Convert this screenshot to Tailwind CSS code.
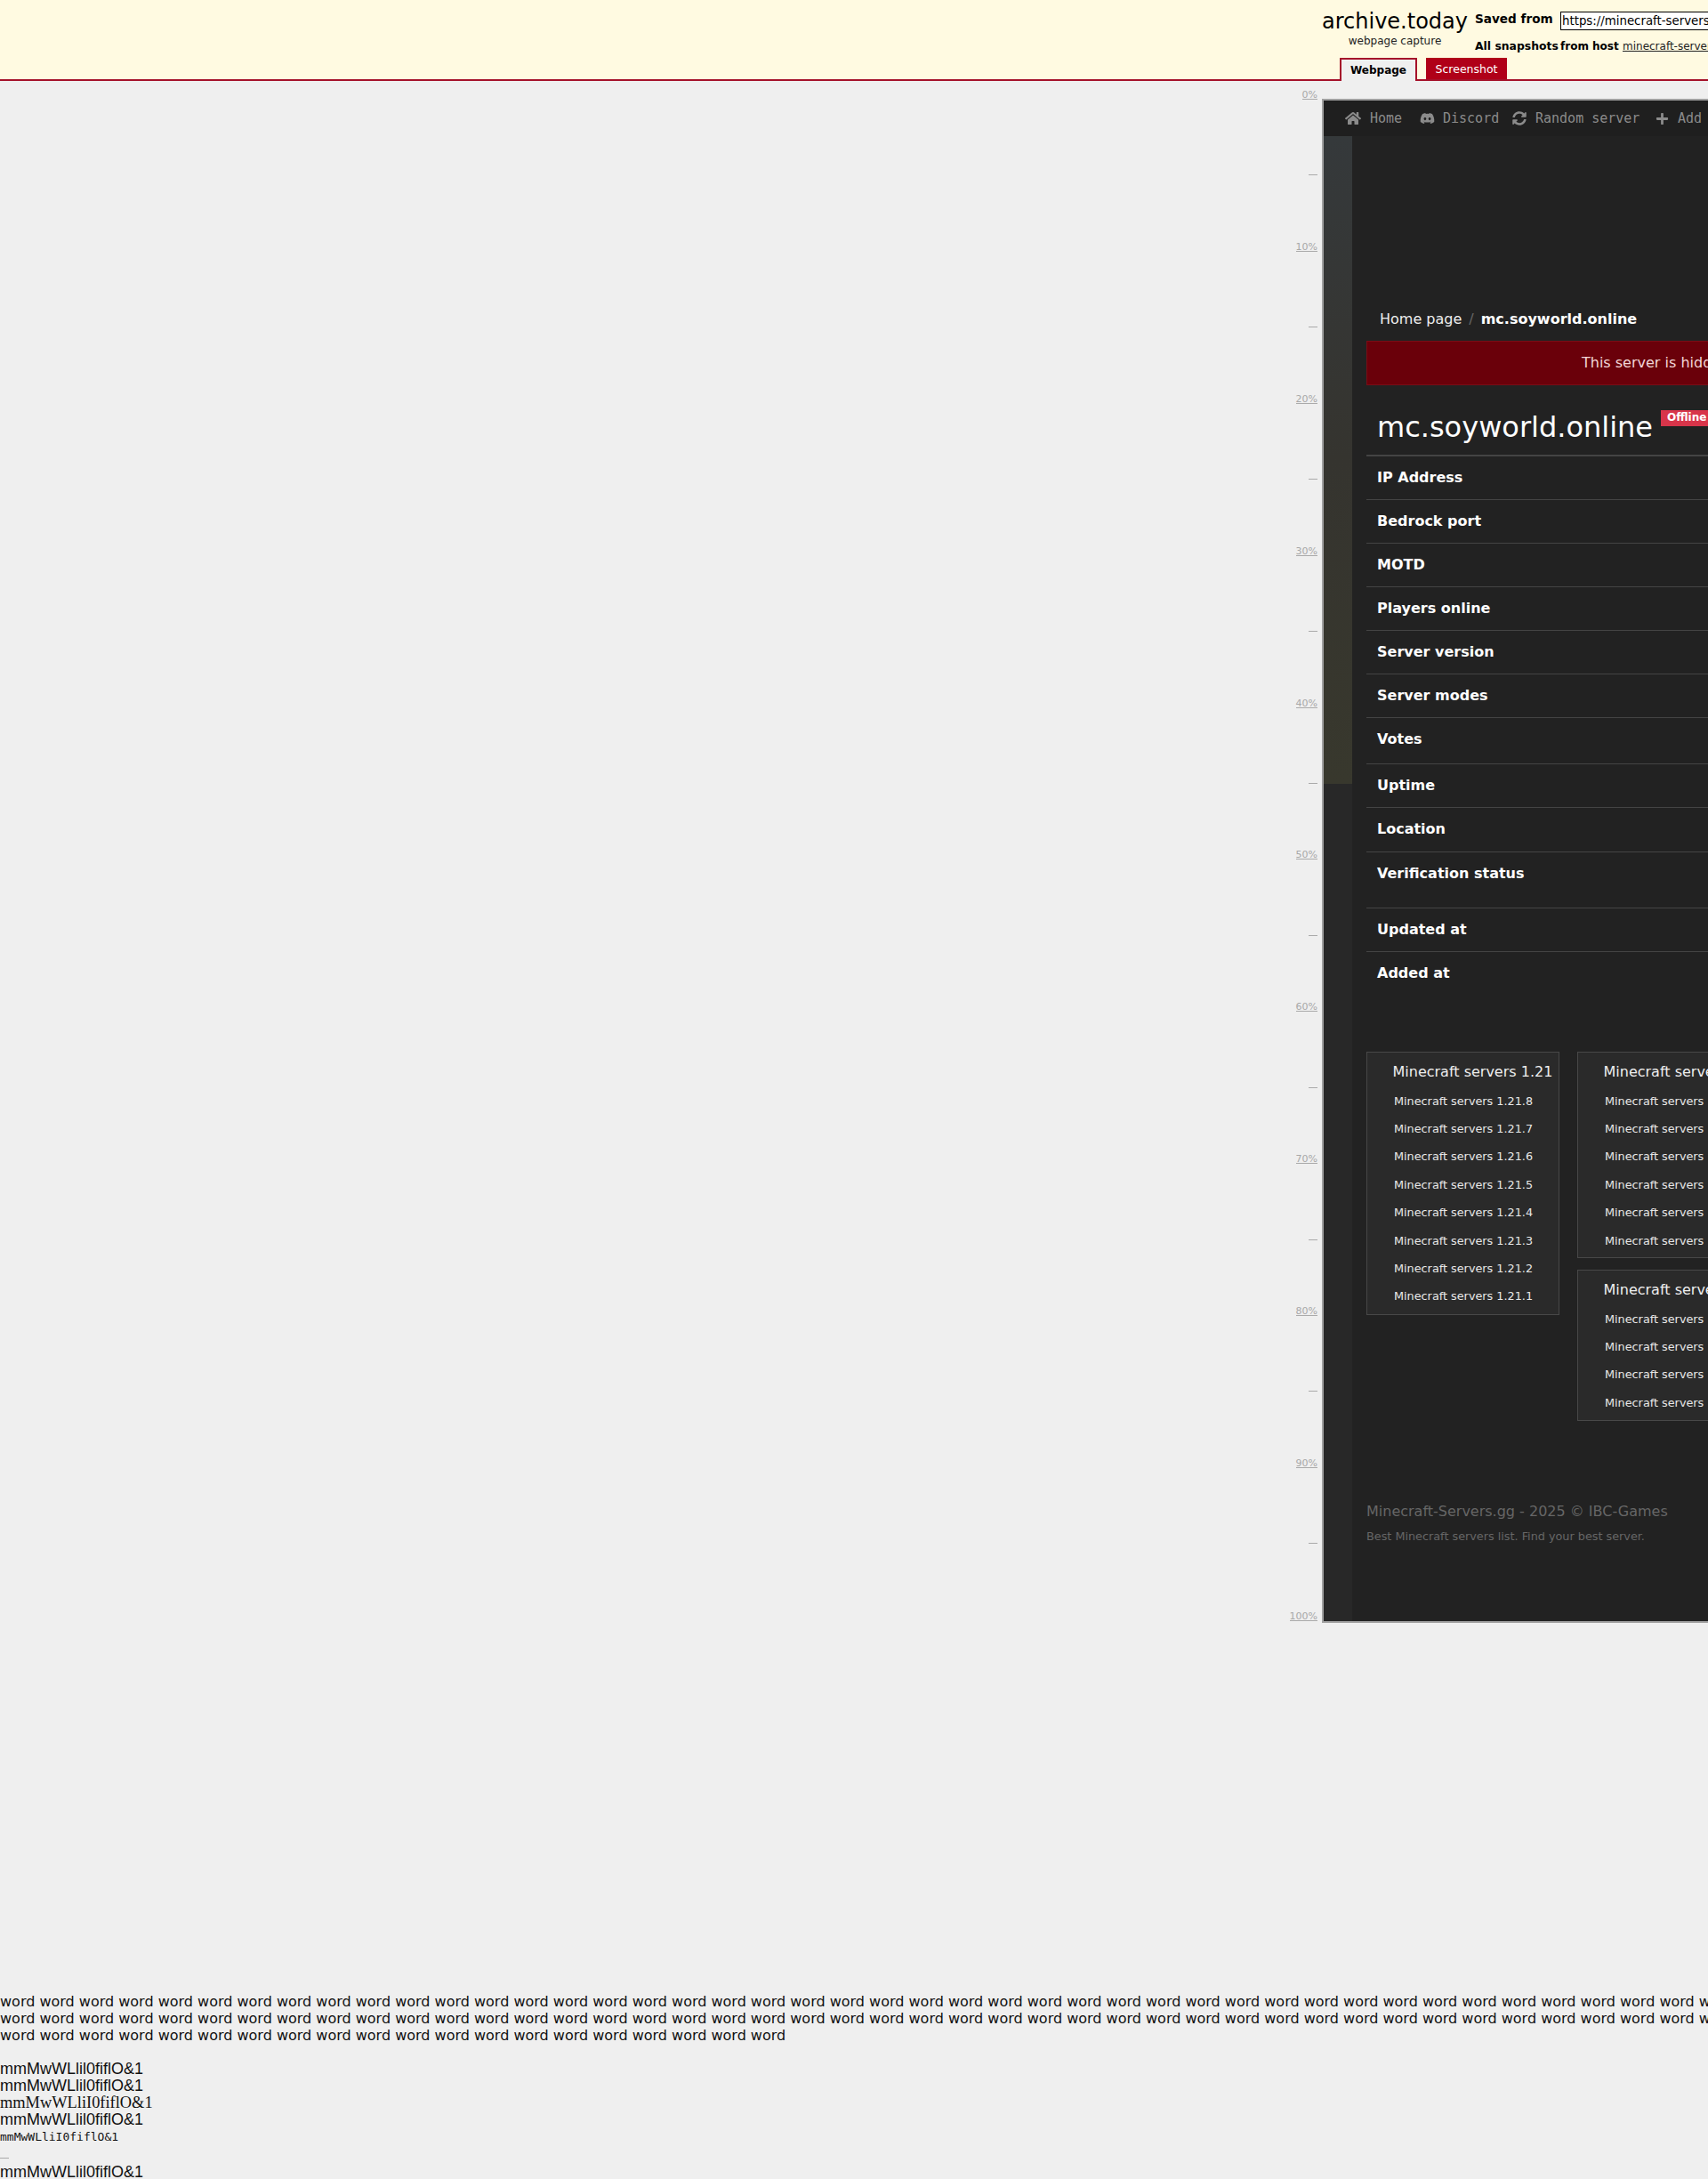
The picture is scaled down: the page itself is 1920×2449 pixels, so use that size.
<!DOCTYPE html>
<html lang="en">
  <head>
    <meta charset="UTF-8" />
    <title>mc.soyworld.online - archive.today</title>
    <script src="https://cdn.jsdelivr.net/npm/@tailwindcss/browser@4"></script>
  </head>
  <body class="w-[1920px] h-[2449px] overflow-hidden bg-[#efefef] font-['DejaVu_Sans',sans-serif] text-black">
    <!-- archive header -->
    <header class="h-[91px] bg-[#fffae1] border-b-2 border-[#a5122a] flex pl-[1486px]">
      <div class="w-[172px] shrink-0">
        <div class="w-[164px] text-center">
          <div class="text-[24px] leading-[28px] pt-[10px]">archive.today</div>
          <div class="text-[12px] leading-[14px] text-[#222] mt-[1px]">webpage capture</div>
        </div>
        <div class="flex gap-[10px] ml-[20px] mt-[12px]">
          <div class="relative z-10 w-[87px] h-[26px] shrink-0 bg-[#efefef] border-2 border-b-0 border-[#a5122a] text-[12px] leading-[24px] font-bold text-center">Webpage</div>
          <div class="w-[91px] h-[24px] shrink-0 bg-[#b00018] text-white text-[12.5px] leading-[26px] text-center">Screenshot</div>
        </div>
      </div>
      <div class="shrink-0 text-[13.6px] font-bold">
        <div class="flex items-start pt-[13px] h-[43px]">
          <span class="w-[96px] leading-[16px]">Saved from</span>
          <div class="w-[300px] h-[21px] bg-white border border-black text-[13.33px] font-normal leading-[19px] px-[1px] whitespace-nowrap overflow-hidden">https://minecraft-servers.gg/server/mc.soyworld.online</div>
        </div>
        <div class="flex items-center text-[12px] leading-[18px] whitespace-nowrap">
          <span class="w-[96px] text-[12.4px]">All snapshots</span>
          <span class="w-[70px]">from host</span>
          <a class="font-normal underline text-[#222]">minecraft-servers.gg</a>
        </div>
      </div>
    </header>

    <main class="flex h-[1733px]">
      <!-- percent ruler -->
      <div class="w-[1481px] shrink-0 flex flex-col items-end text-[11px] leading-[8px] text-[#a8a8a8]">
        <div class="h-[21px] flex items-end"><span class="border-b border-[#aaa] pt-[1px]">0%</span></div>
        <div class="h-[85.45px] flex items-end"><span class="w-[10px] border-b border-[#aaa]"></span></div>
        <div class="h-[85.45px] flex items-end"><span class="border-b border-[#aaa] pt-[1px]">10%</span></div>
        <div class="h-[85.45px] flex items-end"><span class="w-[10px] border-b border-[#aaa]"></span></div>
        <div class="h-[85.45px] flex items-end"><span class="border-b border-[#aaa] pt-[1px]">20%</span></div>
        <div class="h-[85.45px] flex items-end"><span class="w-[10px] border-b border-[#aaa]"></span></div>
        <div class="h-[85.45px] flex items-end"><span class="border-b border-[#aaa] pt-[1px]">30%</span></div>
        <div class="h-[85.45px] flex items-end"><span class="w-[10px] border-b border-[#aaa]"></span></div>
        <div class="h-[85.45px] flex items-end"><span class="border-b border-[#aaa] pt-[1px]">40%</span></div>
        <div class="h-[85.45px] flex items-end"><span class="w-[10px] border-b border-[#aaa]"></span></div>
        <div class="h-[85.45px] flex items-end"><span class="border-b border-[#aaa] pt-[1px]">50%</span></div>
        <div class="h-[85.45px] flex items-end"><span class="w-[10px] border-b border-[#aaa]"></span></div>
        <div class="h-[85.45px] flex items-end"><span class="border-b border-[#aaa] pt-[1px]">60%</span></div>
        <div class="h-[85.45px] flex items-end"><span class="w-[10px] border-b border-[#aaa]"></span></div>
        <div class="h-[85.45px] flex items-end"><span class="border-b border-[#aaa] pt-[1px]">70%</span></div>
        <div class="h-[85.45px] flex items-end"><span class="w-[10px] border-b border-[#aaa]"></span></div>
        <div class="h-[85.45px] flex items-end"><span class="border-b border-[#aaa] pt-[1px]">80%</span></div>
        <div class="h-[85.45px] flex items-end"><span class="w-[10px] border-b border-[#aaa]"></span></div>
        <div class="h-[85.45px] flex items-end"><span class="border-b border-[#aaa] pt-[1px]">90%</span></div>
        <div class="h-[85.45px] flex items-end"><span class="w-[10px] border-b border-[#aaa]"></span></div>
        <div class="h-[87px] flex items-end"><span class="border-b border-[#aaa] pt-[1px]">100%</span></div>
      </div>

      <!-- captured page, runs off the right edge -->
      <div class="ml-[5px] mt-[20px] w-[434px] h-[1713px] shrink-0 overflow-hidden border-2 border-r-0 border-[#a0a0a0] bg-[#222] text-white">
        <nav class="h-[40px] bg-[#1f1f1f] pl-[24px] flex items-center text-[#8b8b8b] font-['DejaVu_Sans_Mono',monospace] text-[15px] whitespace-nowrap">
          <svg class="w-[18px] h-[16px] fill-[#8b8b8b] mr-[10px]" viewBox="0 0 576 512"><path d="M280.37 148.26L96 300.11V464a16 16 0 0 0 16 16l112.06-.29a16 16 0 0 0 15.92-16V368a16 16 0 0 1 16-16h64a16 16 0 0 1 16 16v95.64a16 16 0 0 0 16 16.05L464 480a16 16 0 0 0 16-16V300L295.67 148.26a12.19 12.19 0 0 0-15.3 0zM571.6 251.47L488 182.56V44.05a12 12 0 0 0-12-12h-56a12 12 0 0 0-12 12v72.61L318.47 43a48 48 0 0 0-61 0L4.34 251.47a12 12 0 0 0-1.6 16.9l25.5 31A12 12 0 0 0 45.15 301l235.22-193.74a12.19 12.19 0 0 1 15.3 0L530.9 301a12 12 0 0 0 16.9-1.6l25.5-31a12 12 0 0 0-1.7-16.93z"/></svg>
          <span class="w-[56px]">Home</span>
          <svg class="w-[17px] h-[14px] fill-[#8b8b8b] mr-[9px]" viewBox="0 0 640 512"><path d="M524.531,69.836a1.5,1.5,0,0,0-.764-.7A485.065,485.065,0,0,0,404.081,32.03a1.816,1.816,0,0,0-1.923.91,337.461,337.461,0,0,0-14.9,30.6,447.848,447.848,0,0,0-134.426,0,309.541,309.541,0,0,0-15.135-30.6,1.89,1.89,0,0,0-1.924-.91A483.689,483.689,0,0,0,116.085,69.137a1.712,1.712,0,0,0-.788.676C39.068,183.651,18.186,294.69,28.43,404.354a2.016,2.016,0,0,0,.765,1.375A487.666,487.666,0,0,0,176.02,479.918a1.9,1.9,0,0,0,2.063-.676A348.2,348.2,0,0,0,208.12,430.4a1.86,1.86,0,0,0-1.019-2.588,321.173,321.173,0,0,1-45.868-21.853,1.885,1.885,0,0,1-.185-3.126c3.082-2.309,6.166-4.711,9.109-7.137a1.819,1.819,0,0,1,1.9-.256c96.229,43.917,200.41,43.917,295.5,0a1.812,1.812,0,0,1,1.924.233c2.944,2.426,6.027,4.851,9.132,7.16a1.884,1.884,0,0,1-.162,3.126,301.407,301.407,0,0,1-45.89,21.83,1.875,1.875,0,0,0-1,2.611,391.055,391.055,0,0,0,30.014,48.815,1.864,1.864,0,0,0,2.063.7A486.048,486.048,0,0,0,610.7,405.729a1.882,1.882,0,0,0,.765-1.352C623.729,277.594,590.933,167.465,524.531,69.836ZM222.491,337.58c-28.972,0-52.844-26.587-52.844-59.239S193.056,219.1,222.491,219.1c29.665,0,53.306,26.82,52.843,59.239C275.334,310.993,251.924,337.58,222.491,337.58Zm195.38,0c-28.971,0-52.843-26.587-52.843-59.239S388.437,219.1,417.871,219.1c29.667,0,53.307,26.82,52.844,59.239C470.715,310.993,447.538,337.58,417.871,337.58Z"/></svg>
          <span class="w-[78px]">Discord</span>
          <svg class="w-[16px] h-[16px] fill-[#8b8b8b] mr-[10px]" viewBox="0 0 512 512"><path d="M370.72 133.28C339.458 104.008 298.888 87.962 255.848 88c-77.458.068-144.328 53.178-162.791 126.85-1.344 5.363-6.122 9.15-11.651 9.15H24.103c-7.498 0-13.194-6.807-11.807-14.176C33.933 94.924 134.813 8 256 8c66.448 0 126.791 26.136 171.315 68.685L463.03 40.97C478.149 25.851 504 36.559 504 57.941V192c0 13.255-10.745 24-24 24H345.941c-21.382 0-32.09-25.851-16.971-40.971l41.75-41.749zM32 296h134.059c21.382 0 32.09 25.851 16.971 40.971l-41.75 41.75c31.262 29.273 71.835 45.319 114.876 45.28 77.418-.07 144.315-53.144 162.787-126.849 1.344-5.363 6.122-9.15 11.651-9.15h57.304c7.498 0 13.194 6.807 11.807 14.176C478.067 417.076 377.187 504 256 504c-66.448 0-126.791-26.136-171.315-68.685L48.97 471.03C33.851 486.149 8 475.441 8 454.059V320c0-13.255 10.745-24 24-24z"/></svg>
          <span class="w-[135px]">Random server</span>
          <svg class="w-[15px] h-[15px] fill-[#8b8b8b] mr-[10px]" viewBox="0 0 448 512"><path d="M416 208H272V64c0-17.67-14.33-32-32-32h-32c-17.67 0-32 14.33-32 32v144H32c-17.67 0-32 14.33-32 32v32c0 17.67 14.33 32 32 32h144v144c0 17.67 14.33 32 32 32h32c17.67 0 32-14.33 32-32V304h144c17.67 0 32-14.33 32-32v-32c0-17.67-14.33-32-32-32z"/></svg>
          <span>Add</span>
        </nav>

        <div class="flex h-[1671px]">
          <!-- blurred background strip -->
          <div class="w-[32px] shrink-0 bg-[#282828]">
            <div class="h-[728px] bg-linear-to-b from-[#35393b] via-[#35342f] to-[#38382d]"></div>
          </div>

          <div class="pl-[16px] w-[500px] shrink-0">
            <div class="mt-[187px] mb-[5px] h-[38px] pl-[15px] flex items-center gap-[8px] whitespace-nowrap text-[16px]">
              <span class="text-[#eee]">Home page</span>
              <span class="text-[#666]">/</span>
              <b class="font-bold">mc.soyworld.online</b>
            </div>
            <div class="h-[50px] bg-[#6a000a] border border-[#7a0d16] pl-[241px] text-[16px] leading-[47px] text-[#f2d6d8] whitespace-nowrap">This server is hidden from the list</div>

            <div class="h-[80px] border-b-2 border-[#444] pl-[12px] flex items-start">
              <h1 class="text-[32px] leading-[38px] mt-[28px] whitespace-nowrap">mc.soyworld.online</h1>
              <span class="ml-[9px] mt-[28px] h-[18px] px-[7px] bg-[#d8354a] text-[12px] leading-[17px] font-bold">Offline</span>
            </div>

            <div class="font-bold text-[16px] pl-[12px] h-[49px] leading-[47px] border-b border-[#444]">IP Address</div>
            <div class="font-bold text-[16px] pl-[12px] h-[49px] leading-[47px] border-b border-[#444]">Bedrock port</div>
            <div class="font-bold text-[16px] pl-[12px] h-[49px] leading-[47px] border-b border-[#444]">MOTD</div>
            <div class="font-bold text-[16px] pl-[12px] h-[49px] leading-[47px] border-b border-[#444]">Players online</div>
            <div class="font-bold text-[16px] pl-[12px] h-[49px] leading-[47px] border-b border-[#444]">Server version</div>
            <div class="font-bold text-[16px] pl-[12px] h-[49px] leading-[47px] border-b border-[#444]">Server modes</div>
            <div class="font-bold text-[16px] pl-[12px] h-[52px] leading-[47px] border-b border-[#444]">Votes</div>
            <div class="font-bold text-[16px] pl-[12px] h-[49px] leading-[47px] border-b border-[#444]">Uptime</div>
            <div class="font-bold text-[16px] pl-[12px] h-[50px] leading-[47px] border-b border-[#444]">Location</div>
            <div class="font-bold text-[16px] pl-[12px] h-[63px] leading-[47px] border-b border-[#444]">Verification status</div>
            <div class="font-bold text-[16px] pl-[12px] h-[49px] leading-[47px] border-b border-[#444]">Updated at</div>
            <div class="font-bold text-[16px] pl-[12px] h-[49px] leading-[47px]">Added at</div>

            <!-- version cards -->
            <div class="mt-[63px] flex gap-[20px] items-start">
              <div class="w-[217px] h-[296px] shrink-0 bg-[#2a2a2a] border border-[#484848] pl-[30px] whitespace-nowrap">
                <div class="h-[38.5px] text-[16px] leading-[44px] text-[#eee] -ml-[1.5px]">Minecraft servers 1.21</div>
                <ul class="text-[12.8px] text-[#e8e8e8] leading-[31.4px]">
                  <li>Minecraft servers 1.21.8</li>
                  <li>Minecraft servers 1.21.7</li>
                  <li>Minecraft servers 1.21.6</li>
                  <li>Minecraft servers 1.21.5</li>
                  <li>Minecraft servers 1.21.4</li>
                  <li>Minecraft servers 1.21.3</li>
                  <li>Minecraft servers 1.21.2</li>
                  <li>Minecraft servers 1.21.1</li>
                </ul>
              </div>
              <div class="w-[217px] shrink-0 flex flex-col gap-[13px]">
                <div class="h-[232px] bg-[#2a2a2a] border border-[#484848] pl-[30px] whitespace-nowrap">
                  <div class="h-[38.5px] text-[16px] leading-[44px] text-[#eee] -ml-[1.5px]">Minecraft servers 1.20</div>
                  <ul class="text-[12.8px] text-[#e8e8e8] leading-[31.4px]">
                    <li>Minecraft servers 1.20.6</li>
                    <li>Minecraft servers 1.20.5</li>
                    <li>Minecraft servers 1.20.4</li>
                    <li>Minecraft servers 1.20.3</li>
                    <li>Minecraft servers 1.20.2</li>
                    <li>Minecraft servers 1.20.1</li>
                  </ul>
                </div>
                <div class="h-[170px] bg-[#2a2a2a] border border-[#484848] pl-[30px] whitespace-nowrap">
                  <div class="h-[38.5px] text-[16px] leading-[44px] text-[#eee] -ml-[1.5px]">Minecraft servers 1.19</div>
                  <ul class="text-[12.8px] text-[#e8e8e8] leading-[31.4px]">
                    <li>Minecraft servers 1.19.4</li>
                    <li>Minecraft servers 1.19.3</li>
                    <li>Minecraft servers 1.19.2</li>
                    <li>Minecraft servers 1.19.1</li>
                  </ul>
                </div>
              </div>
            </div>

            <footer class="mt-[90px] text-[#666] whitespace-nowrap">
              <div class="text-[16px] leading-[24px]">Minecraft-Servers.gg - 2025 © IBC-Games</div>
              <div class="text-[12.8px] leading-[20px] mt-[6px]">Best Minecraft servers list. Find your best server.</div>
            </footer>
          </div>
        </div>
      </div>
    </main>

    <!-- font probe text left at the bottom of the page -->
    <div class="mt-[416px] text-[#111] whitespace-nowrap">
      <div class="text-[16px] leading-[19px]">
        <div>word word word word word word word word word word word word word word word word word word word word word word word word word word word word word word word word word word word word word word word word word word word word word word</div>
        <div>word word word word word word word word word word word word word word word word word word word word word word word word word word word word word word word word word word word word word word word word word word word word word word</div>
        <div>word word word word word word word word word word word word word word word word word word word word</div>
      </div>
      <div class="mt-[19px] text-[18px] leading-[19px]">
        <div class="font-['Liberation_Sans',sans-serif]">mmMwWLlil0fiflO&amp;1</div>
        <div class="font-['Liberation_Sans',sans-serif]">mmMwWLlil0fiflO&amp;1</div>
        <div class="font-['Liberation_Serif',serif] text-[18.4px]">mmMwWLliI0fiflO&amp;1</div>
        <div class="font-['Liberation_Sans',sans-serif]">mmMwWLlil0fiflO&amp;1</div>
        <div class="font-['DejaVu_Sans_Mono',monospace] text-[13px]">mmMwWLliI0fiflO&amp;1</div>
        <div class="w-[10px] h-[1px] bg-[#aaa] mt-[14px]"></div>
        <div class="font-['Liberation_Sans',sans-serif] mt-[6px]">mmMwWLlil0fiflO&amp;1</div>
      </div>
    </div>
  </body>
</html>
